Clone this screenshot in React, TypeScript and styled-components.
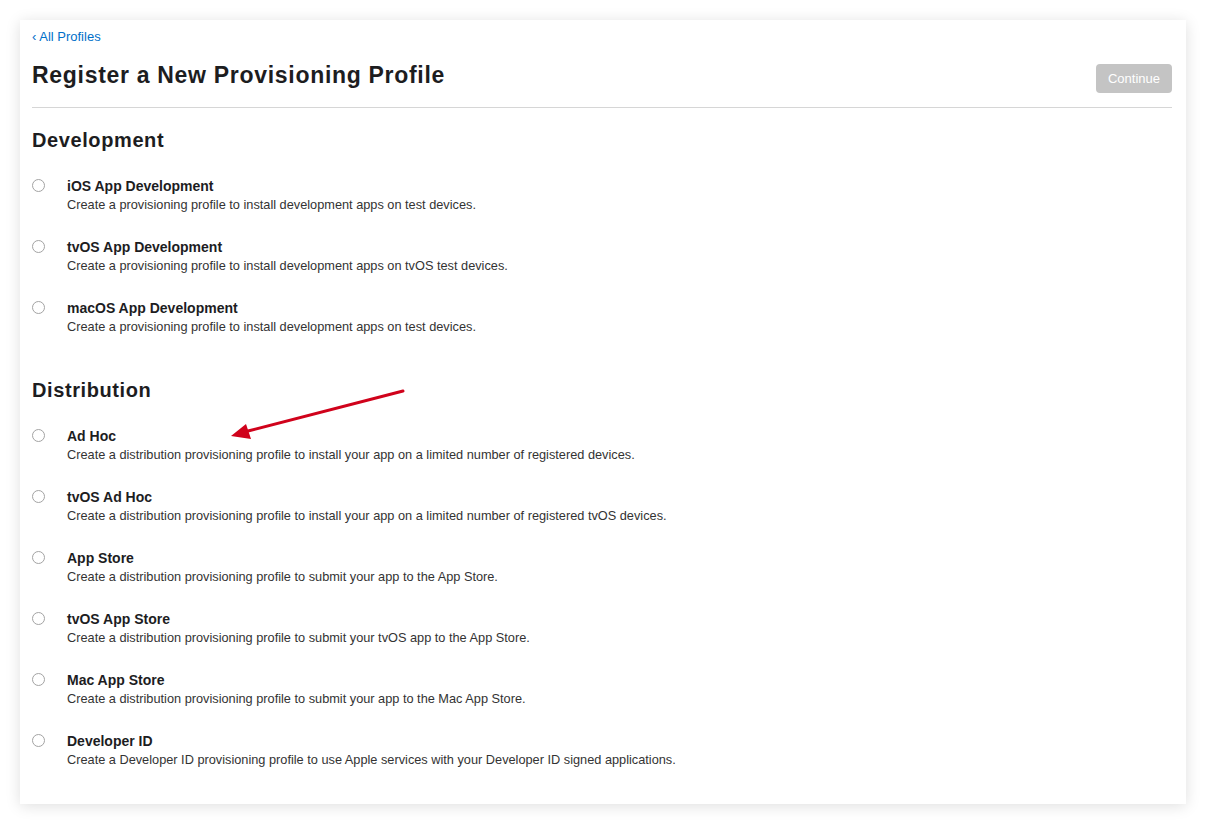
import React from 'react'
import styled, { createGlobalStyle } from 'styled-components'

const GlobalStyle = createGlobalStyle`
  html, body {
    margin: 0;
    padding: 0;
    background: #ffffff;
  }
  body {
    font-family: 'Liberation Sans', Arial, sans-serif;
    color: #1d1d1f;
    -webkit-font-smoothing: antialiased;
  }
`

const Page = styled.div`
  padding: 20px;
`

const Card = styled.div`
  position: relative;
  background: #ffffff;
  box-shadow: 0 2px 14px rgba(0, 0, 0, 0.13);
  padding: 8px 14px 35px 12px;
`

const BackLink = styled.a`
  display: block;
  width: fit-content;
  padding-top: 1px;
  font-size: 13px;
  line-height: 15px;
  color: #0070c9;
  text-decoration: none;
  cursor: pointer;
`

const HeaderRow = styled.div`
  display: flex;
  justify-content: space-between;
  align-items: flex-start;
  padding-bottom: 14px;
  border-bottom: 1px solid #d6d6d6;
`

const Title = styled.h1`
  margin: 16px 0 0;
  font-size: 23px;
  line-height: 30px;
  font-weight: 700;
  letter-spacing: 0.7px;
`

const ContinueButton = styled.button`
  margin-top: 20px;
  height: 29px;
  padding: 0 12px;
  border: none;
  border-radius: 4px;
  background: #c4c4c4;
  color: #ffffff;
  font-family: inherit;
  font-size: 13px;
`

const SectionTitle = styled.h2<{ $top: number }>`
  margin: ${(p) => p.$top}px 0 0;
  font-size: 20px;
  line-height: 24px;
  font-weight: 700;
  letter-spacing: 0.6px;
`

const OptionList = styled.div`
  display: flex;
  flex-direction: column;
  gap: 24px;
  padding-top: 25px;
`

const Option = styled.label`
  display: flex;
  align-items: flex-start;
  gap: 22px;
  cursor: pointer;
`

const Radio = styled.span`
  flex: none;
  box-sizing: border-box;
  width: 13px;
  height: 13px;
  margin-top: 2px;
  border: 1px solid #a3a3a3;
  border-radius: 50%;
  background: #ffffff;
`

const OptionText = styled.div`
  display: flex;
  flex-direction: column;
`

const OptionName = styled.span`
  font-size: 14px;
  line-height: 18px;
  font-weight: 700;
  color: #1d1d1f;
`

const OptionDesc = styled.span`
  padding-top: 1px;
  font-size: 12.75px;
  line-height: 18px;
  color: #333333;
`

const Annotation = styled.svg`
  position: absolute;
  left: 0;
  top: 0;
  pointer-events: none;
`

type Item = { name: string; desc: string }

const development: Item[] = [
  { name: 'iOS App Development', desc: 'Create a provisioning profile to install development apps on test devices.' },
  { name: 'tvOS App Development', desc: 'Create a provisioning profile to install development apps on tvOS test devices.' },
  { name: 'macOS App Development', desc: 'Create a provisioning profile to install development apps on test devices.' },
]

const distribution: Item[] = [
  { name: 'Ad Hoc', desc: 'Create a distribution provisioning profile to install your app on a limited number of registered devices.' },
  { name: 'tvOS Ad Hoc', desc: 'Create a distribution provisioning profile to install your app on a limited number of registered tvOS devices.' },
  { name: 'App Store', desc: 'Create a distribution provisioning profile to submit your app to the App Store.' },
  { name: 'tvOS App Store', desc: 'Create a distribution provisioning profile to submit your tvOS app to the App Store.' },
  { name: 'Mac App Store', desc: 'Create a distribution provisioning profile to submit your app to the Mac App Store.' },
  { name: 'Developer ID', desc: 'Create a Developer ID provisioning profile to use Apple services with your Developer ID signed applications.' },
]

function Options({ items }: { items: Item[] }) {
  return (
    <OptionList>
      {items.map((it) => (
        <Option key={it.name}>
          <Radio />
          <OptionText>
            <OptionName>{it.name}</OptionName>
            <OptionDesc>{it.desc}</OptionDesc>
          </OptionText>
        </Option>
      ))}
    </OptionList>
  )
}

export default function App() {
  return (
    <>
      <GlobalStyle />
      <Page>
        <Card>
          <BackLink>‹ All Profiles</BackLink>
          <HeaderRow>
            <Title>Register a New Provisioning Profile</Title>
            <ContinueButton disabled>Continue</ContinueButton>
          </HeaderRow>

          <SectionTitle $top={20}>Development</SectionTitle>
          <Options items={development} />

          <SectionTitle $top={42}>Distribution</SectionTitle>
          <Options items={distribution} />

          {/* red annotation arrow pointing at Ad Hoc */}
          <Annotation width="420" height="440" viewBox="0 0 420 440">
            <line x1="383" y1="371" x2="228" y2="411" stroke="#d0021b" strokeWidth="3" strokeLinecap="round" />
            <polygon points="211,416 226,404 231,419" fill="#d0021b" />
          </Annotation>
        </Card>
      </Page>
    </>
  )
}
